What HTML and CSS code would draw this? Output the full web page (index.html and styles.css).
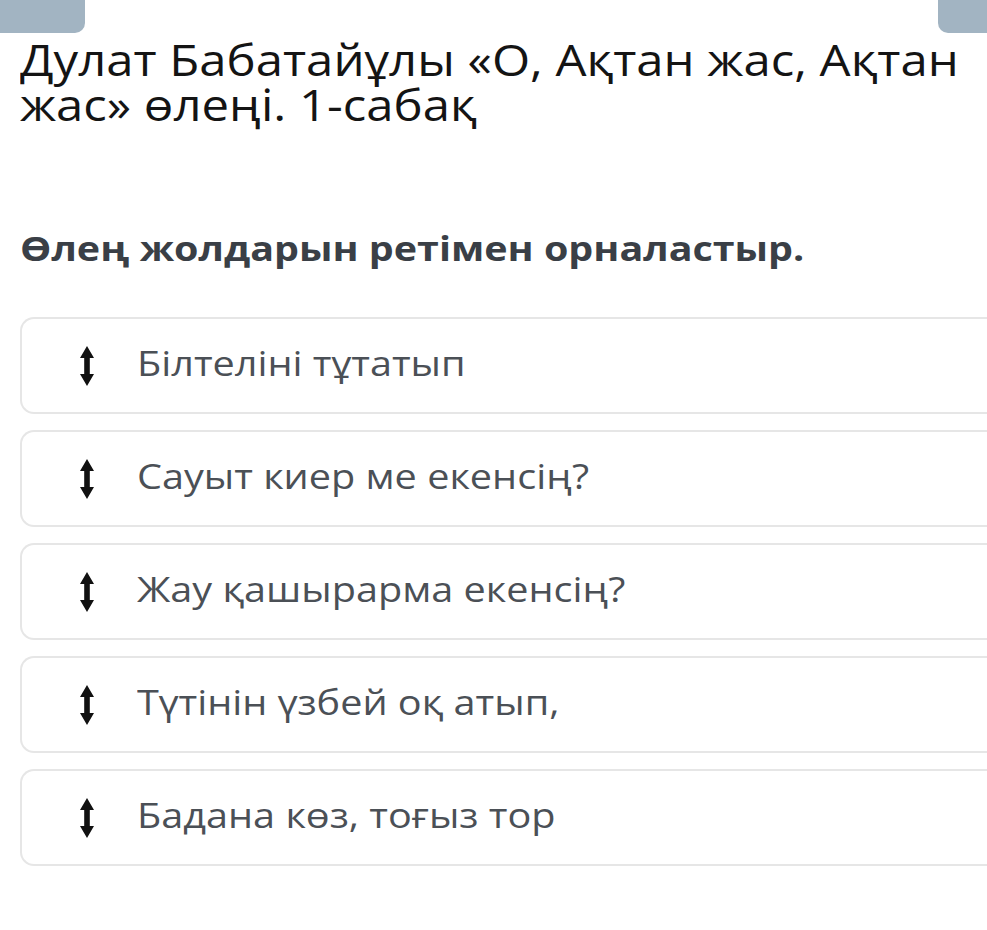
FILE: index.html
```html
<!DOCTYPE html>
<html lang="kk">

<head>
    <meta charset="UTF-8">
    <title>Өлең жолдарын ретімен орналастыр</title>
    <link rel="stylesheet" href="styles.css">
</head>

<body>
    <div class="topbar">
        <div class="tab tab-left"></div>
        <div class="tab tab-right"></div>
    </div>

    <div class="page">
        <h1 class="title">Дулат Бабатайұлы «О, Ақтан жас, Ақтан жас» өлеңі. 1-сабақ</h1>

        <h2 class="question">Өлең жолдарын ретімен орналастыр.</h2>

        <ul class="lines">
            <li class="line">
                <svg class="drag" viewBox="0 0 14 40"><path d="M7 0 L14 12 L9.8 12 L9.8 28 L14 28 L7 40 L0 28 L4.2 28 L4.2 12 L0 12 Z"/></svg>
                <span class="text">Білтеліні тұтатып</span>
            </li>
            <li class="line">
                <svg class="drag" viewBox="0 0 14 40"><path d="M7 0 L14 12 L9.8 12 L9.8 28 L14 28 L7 40 L0 28 L4.2 28 L4.2 12 L0 12 Z"/></svg>
                <span class="text">Сауыт киер ме екенсің?</span>
            </li>
            <li class="line">
                <svg class="drag" viewBox="0 0 14 40"><path d="M7 0 L14 12 L9.8 12 L9.8 28 L14 28 L7 40 L0 28 L4.2 28 L4.2 12 L0 12 Z"/></svg>
                <span class="text">Жау қашырарма екенсің?</span>
            </li>
            <li class="line">
                <svg class="drag" viewBox="0 0 14 40"><path d="M7 0 L14 12 L9.8 12 L9.8 28 L14 28 L7 40 L0 28 L4.2 28 L4.2 12 L0 12 Z"/></svg>
                <span class="text">Түтінін үзбей оқ атып,</span>
            </li>
            <li class="line">
                <svg class="drag" viewBox="0 0 14 40"><path d="M7 0 L14 12 L9.8 12 L9.8 28 L14 28 L7 40 L0 28 L4.2 28 L4.2 12 L0 12 Z"/></svg>
                <span class="text">Бадана көз, тоғыз тор</span>
            </li>
        </ul>
    </div>
</body>

</html>
```

FILE: styles.css
```css
html,
body {
    margin: 0;
    padding: 0;
    background: #fff;
    overflow-x: hidden;
}

body {
    font-family: "Open Sans", "Noto Sans", sans-serif;
}

.topbar {
    display: flex;
    justify-content: space-between;
    height: 30px;
}

.tab {
    height: 33px;
    background: #a2b4c2;
}

.tab-left {
    width: 85px;
    border-radius: 0 0 10px 0;
}

.tab-right {
    width: 49px;
    border-radius: 0 0 0 10px;
}

.page {
    padding: 0 0 0 20px;
}

/* the shot is a bit wider than tall, so the text is stretched to match */
.title {
    margin: 7px 0 0 0;
    width: 850px;
    font-size: 44px;
    line-height: 45px;
    font-weight: 400;
    color: #141414;
    transform: scaleX(1.115);
    transform-origin: left top;
}

.question {
    margin: 99px 0 0 0;
    width: 690px;
    font-size: 34px;
    line-height: 44px;
    font-weight: 700;
    color: #3a3f46;
    white-space: nowrap;
    transform: scaleX(1.16);
    transform-origin: left top;
}

/* the cards run on past the right edge of the screen */
.lines {
    list-style: none;
    margin: 47px 0 0 0;
    padding: 0;
    display: flex;
    flex-direction: column;
    gap: 16px;
}

.line {
    box-sizing: border-box;
    display: flex;
    align-items: center;
    height: 97px;
    padding: 0 0 5px 58px;
    border: 2px solid #e6e6e6;
    border-right: none;
    border-radius: 14px 0 0 14px;
    font-size: 34px;
    color: #4b5056;
}

.drag {
    width: 14px;
    height: 40px;
    fill: #111;
    flex: none;
    margin: 5px 43px 0 0;
}

.text {
    display: inline-block;
    white-space: nowrap;
    transform: scaleX(1.165);
    transform-origin: left center;
}
```
